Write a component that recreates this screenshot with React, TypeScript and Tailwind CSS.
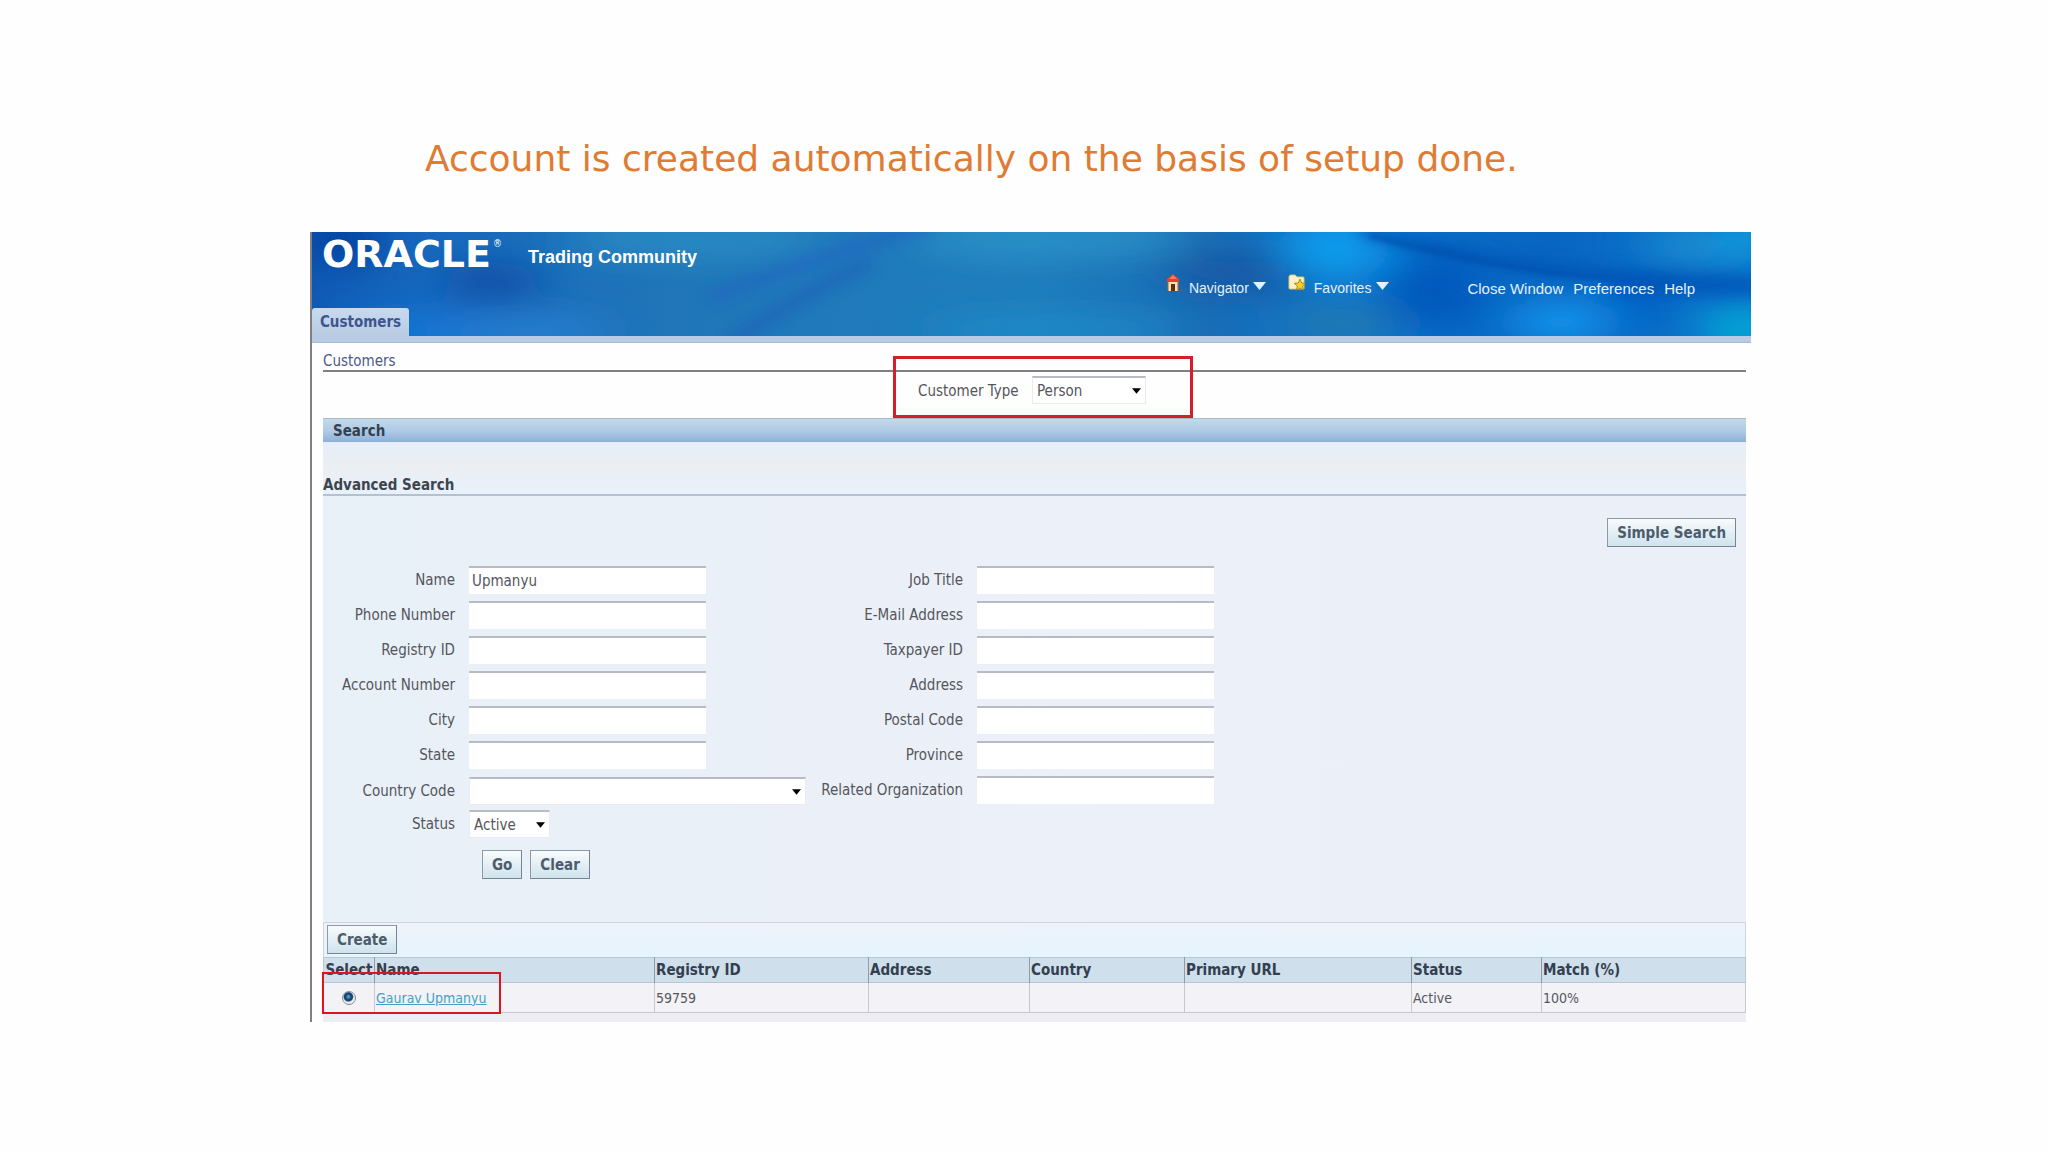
import type { ReactNode } from "react";

function Caret({ className }: { className: string }) {
  return (
    <svg viewBox="0 0 10 6" className={className} aria-hidden="true">
      <path d="M0 0h10L5 6z" fill="currentColor" />
    </svg>
  );
}

function HeaderArt() {
  return (
    <svg
      viewBox="0 0 1441 104"
      preserveAspectRatio="none"
      className="absolute inset-0 h-full w-full"
      aria-hidden="true"
    >
      <defs>
        <linearGradient id="sky" x1="0" x2="1" y1="0" y2="0">
          <stop offset="0" stopColor="#0f59b4" />
          <stop offset="0.08" stopColor="#1668bd" />
          <stop offset="0.25" stopColor="#2076b8" />
          <stop offset="0.5" stopColor="#1f7dbd" />
          <stop offset="0.62" stopColor="#1a6db5" />
          <stop offset="0.72" stopColor="#0a72cc" />
          <stop offset="0.86" stopColor="#0866c2" />
          <stop offset="1" stopColor="#0b74cc" />
        </linearGradient>
        <filter id="wide" x="-100%" y="-200%" width="300%" height="500%">
          <feGaussianBlur stdDeviation="24 16" />
        </filter>
        <filter id="streak" x="-50%" y="-100%" width="200%" height="300%">
          <feGaussianBlur stdDeviation="7" />
        </filter>
        <filter id="edge" x="-20%" y="-50%" width="140%" height="200%">
          <feGaussianBlur stdDeviation="2" />
        </filter>
      </defs>
      <rect width="1441" height="104" fill="url(#sky)" />
      <g filter="url(#wide)">
        <ellipse cx="30" cy="8" rx="36" ry="24" fill="#063f9c" />
        <ellipse cx="180" cy="50" rx="50" ry="20" fill="#0b4fa8" />
        <ellipse cx="110" cy="100" rx="100" ry="18" fill="#1877d8" />
        <ellipse cx="220" cy="100" rx="80" ry="14" fill="#2a82d6" />
        <ellipse cx="380" cy="6" rx="130" ry="18" fill="#2c8cc4" />
        <ellipse cx="740" cy="6" rx="140" ry="18" fill="#2a93c8" />
        <ellipse cx="740" cy="98" rx="130" ry="16" fill="#1c8ac8" />
        <ellipse cx="930" cy="40" rx="80" ry="22" fill="#1458a4" />
        <ellipse cx="1025" cy="16" rx="55" ry="30" fill="#0e9cec" />
        <ellipse cx="1030" cy="92" rx="60" ry="22" fill="#2379b2" />
        <ellipse cx="1125" cy="60" rx="50" ry="36" fill="#0558bc" />
        <ellipse cx="1250" cy="90" rx="50" ry="20" fill="#169af0" />
        <ellipse cx="1330" cy="70" rx="30" ry="22" fill="#0562c6" />
        <ellipse cx="1390" cy="12" rx="60" ry="18" fill="#1a8ed0" />
        <ellipse cx="1430" cy="98" rx="34" ry="22" fill="#02b4d8" />
        <ellipse cx="1437" cy="6" rx="20" ry="16" fill="#06b4ea" />
      </g>
      <g filter="url(#streak)" fill="none" opacity="0.75">
        <path d="M400 66C460 42 530 16 620 -6" stroke="#2262c4" strokeWidth="10" />
        <path d="M420 110C460 84 490 62 560 30" stroke="#1d64b8" strokeWidth="14" />
        <path d="M1050 -2C1150 26 1260 46 1460 50" stroke="#0450b0" strokeWidth="12" />
        <path d="M1300 54C1350 60 1390 58 1460 56" stroke="#0452b8" strokeWidth="14" />
      </g>
      <path
        d="M1060 4C1140 24 1210 40 1300 46"
        fill="none"
        stroke="#0648a8"
        strokeWidth="4"
        opacity="0.5"
        filter="url(#edge)"
      />
    </svg>
  );
}

function HouseIcon() {
  return (
    <svg viewBox="0 0 14 18" className="h-[18px] w-[14px]" aria-hidden="true">
      <path d="M2 8h10v9H2z" fill="#f3e3b4" />
      <path d="M7 0 1 5v3h12V5z" fill="#e2412e" />
      <path d="M7 1 3 5h8z" fill="#f47b5c" />
      <path d="M5 10h4v7H5z" fill="#5a2f1c" />
      <path d="M2 8v9M12 8v9" stroke="#b5651f" />
    </svg>
  );
}

function FolderStarIcon() {
  return (
    <svg viewBox="0 0 18 18" className="h-[18px] w-[18px]" aria-hidden="true">
      <path d="M1 3q0-2 2-2h4l2 2h6q1 0 1 1v11H2q-1 0-1-1z" fill="#fbf0c8" stroke="#e0c67e" />
      <path
        d="m12 5 1.7 4 4.1.3-3.2 2.8 1 4.2-3.6-2.3-3.6 2.3 1-4.2-3.2-2.8 4.1-.3z"
        fill="#f4d21f"
        stroke="#8d7a1c"
        strokeWidth="0.8"
      />
    </svg>
  );
}

function Button({ children }: { children: ReactNode }) {
  return (
    <button
      type="button"
      className="h-[29px] border border-[#8d9ba8] border-r-[#77838f] border-b-[#77838f] bg-linear-to-b from-[#f8fbfc] to-[#cfe3ee] px-[9px] leading-[18px] font-bold text-[#4d5c6c]"
    >
      {children}
    </button>
  );
}

function TextField({ id, label, value }: { id: string; label: string; value?: string }) {
  return (
    <div className="flex h-[28px] items-center justify-end gap-[14px]">
      <label htmlFor={id} className="whitespace-nowrap">{label}</label>
      <input
        id={id}
        defaultValue={value}
        className="h-full w-[237px] border-t-2 border-[#b9bbc3] bg-white px-[3px] outline-none"
      />
    </div>
  );
}

function Select({ id, value, className }: { id: string; value: string; className: string }) {
  return (
    <div className={className}>
      <select
        id={id}
        defaultValue={value}
        className="h-[28px] w-full appearance-none border border-t-2 border-[#eceaf0] border-t-[#b9bbc3] bg-white pl-[4px] outline-none"
      >
        <option>{value}</option>
      </select>
      <Caret className="pointer-events-none absolute top-[12px] right-[5px] h-[6px] w-[9px] text-black" />
    </div>
  );
}

const rightFields = [
  ["job", "Job Title"],
  ["email", "E-Mail Address"],
  ["tax", "Taxpayer ID"],
  ["address", "Address"],
  ["postal", "Postal Code"],
  ["province", "Province"],
  ["related", "Related Organization"],
];

const leftFields = [
  ["name", "Name", "Upmanyu"],
  ["phone", "Phone Number", ""],
  ["registry", "Registry ID", ""],
  ["account", "Account Number", ""],
  ["city", "City", ""],
  ["state", "State", ""],
];

const columns = ["Registry ID", "Address", "Country", "Primary URL", "Status", "Match (%)"];
const values = ["59759", "", "", "", "Active", "100%"];

export default function App() {
  return (
    <main className="min-h-screen bg-[#fefefe] font-['DejaVu_Sans_Condensed','DejaVu_Sans',sans-serif] text-[15px] leading-[18px] text-[#55565c]">
      <h1 className="pt-[136px] pl-[425px] font-['DejaVu_Sans',sans-serif] text-[36px] leading-[46px] text-[#e07b33]">
        Account is created automatically on the basis of setup done.
      </h1>

      <section className="mt-[50px] mr-[297px] ml-[310px] border-l-2 border-[#808080]">
        <header className="relative flex h-[104px] justify-between bg-[#1a6db5] text-white">
          <HeaderArt />
          <div className="relative flex flex-col justify-between">
            <div className="flex items-start">
              <span className="pl-[10px] font-['DejaVu_Sans',sans-serif] text-[38px] leading-[44px] font-bold">
                ORACLE
              </span>
              <span className="pt-[7px] pl-[2px] text-[10px] leading-[10px]">®</span>
              <span className="pt-[14px] pl-[26px] font-['Liberation_Sans',sans-serif] text-[18px] leading-[22px] font-bold">
                Trading Community
              </span>
            </div>
            <a
              href="#customers"
              className="flex h-[28px] w-[97px] items-center justify-center rounded-t-[3px] bg-linear-to-b from-[#c8daf0] to-[#b9cbe0] font-bold text-[#3d5590]"
            >
              Customers
            </a>
          </div>
          <nav className="relative flex items-start pt-[42px] pr-[56px] font-['Liberation_Sans',sans-serif] text-[15px] text-[#e4f1fb]">
            <a href="#navigator" className="flex items-start text-[14px]">
              <HouseIcon />
              <span className="pt-[5px] pl-[9px]">Navigator</span>
              <Caret className="mt-[8px] ml-[4px] h-[8px] w-[13px]" />
            </a>
            <a href="#favorites" className="ml-[22px] flex items-start text-[14px]">
              <FolderStarIcon />
              <span className="pt-[5px] pl-[8px]">Favorites</span>
              <Caret className="mt-[8px] ml-[5px] h-[8px] w-[13px]" />
            </a>
            <a href="#close" className="ml-[78px] pt-[6px]">Close Window</a>
            <a href="#preferences" className="ml-[10px] pt-[6px]">Preferences</a>
            <a href="#help" className="ml-[10px] pt-[6px]">Help</a>
          </nav>
        </header>
        <div className="h-[7px] border-b border-[#a9b9cc] bg-[#b8cce6]" />

        <div className="pr-[5px] pl-[11px]">
          <h2 id="customers" className="border-b-2 border-[#808084] pt-[9px] text-[#4b5a86]">
            Customers
          </h2>
          <div className="relative flex h-[46px] items-start pt-[4px] pl-[595px]">
            <div className="pointer-events-none absolute -top-[16px] left-[570px] h-[62px] w-[300px] border-[3px] border-[#d21f2c]" />
            <label htmlFor="type" className="w-[114px] pt-[6px]">Customer Type</label>
            <Select id="type" value="Person" className="relative w-[114px]" />
          </div>

          <div className="bg-[#ebeff8]">
            <h3 className="flex h-[24px] items-center border-t border-[#a9bac8] bg-linear-to-b from-[#c3d9e8] via-[#b0cbe8] to-[#8db1d4] pl-[10px] font-bold text-[#33424f]">
              Search
            </h3>
            <h4 className="border-b-2 border-[#b3c1d1] bg-linear-to-b from-[#e6eef9] via-[#eceff3] to-[#e8f1fa] pt-[34px] font-bold text-[#3d454f]">
              Advanced Search
            </h4>
            <form className="flex flex-col bg-linear-to-r from-[#e8f0f8] via-[#ecf0f8] to-[#ebeff8] pb-[43px]">
              <div className="flex justify-end pt-[22px] pr-[10px] pb-[19px]">
                <Button>Simple Search</Button>
              </div>
              <div className="flex items-start">
                <div className="flex w-[383px] flex-col gap-[7px]">
                  {leftFields.map(([id, label, value]) => (
                    <TextField key={id} id={id} label={label} value={value} />
                  ))}
                  <div className="mt-px flex items-start gap-[14px]">
                    <label htmlFor="country" className="w-[132px] shrink-0 pt-[5px] text-right">Country Code</label>
                    <Select id="country" value="" className="relative w-[337px] shrink-0" />
                  </div>
                  <div className="-mt-[2px] flex items-start gap-[14px]">
                    <label htmlFor="status" className="w-[132px] shrink-0 pt-[5px] text-right">Status</label>
                    <Select id="status" value="Active" className="relative w-[81px]" />
                  </div>
                  <div className="mt-[5px] flex gap-[8px] pl-[159px]">
                    <Button>Go</Button>
                    <Button>Clear</Button>
                  </div>
                </div>
                <div className="ml-[108px] flex w-[400px] flex-col gap-[7px]">
                  {rightFields.map(([id, label]) => (
                    <TextField key={id} id={id} label={label} />
                  ))}
                </div>
              </div>
            </form>

            <div className="flex h-[35px] items-start border border-b-0 border-[#cdd5df] bg-linear-to-b from-[#eef2fa] to-[#e5f4fe] pt-[2px] pl-[3px]">
              <Button>Create</Button>
            </div>
            <div className="relative bg-[#eeedf3] pb-[9px]">
              <table className="w-full table-fixed border-collapse text-left">
                <colgroup>
                  <col className="w-[51px]" />
                  <col className="w-[280px]" />
                  <col className="w-[214px]" />
                  <col className="w-[161px]" />
                  <col className="w-[155px]" />
                  <col className="w-[227px]" />
                  <col className="w-[130px]" />
                  <col />
                </colgroup>
                <thead>
                  <tr className="h-[25px] border border-[#b9c7d2] bg-[#cfdfec] text-[#33404f]">
                    <th className="p-0 text-center">Select</th>
                    {["Name", ...columns].map((c) => (
                      <th key={c} className="border-l border-[#8f9ba6] p-0 pl-px">{c}</th>
                    ))}
                  </tr>
                </thead>
                <tbody className="text-[14px]">
                  <tr className="h-[30px] border border-[#c6c8d0] bg-[#f2f2f7]">
                    <td className="p-0">
                      <input
                        type="radio"
                        defaultChecked
                        aria-label="Select Gaurav Upmanyu"
                        className="mx-auto block h-[14px] w-[14px] appearance-none rounded-full border border-[#8b8f96] bg-[radial-gradient(circle_at_45%_40%,#5fb4e0_0,#16436f_30%,#16436f_42%,#e8edf2_55%)]"
                      />
                    </td>
                    <td className="border-l border-[#c6c8d0] p-0 pl-px">
                      <a href="#gaurav" className="text-[#4a9fc0] underline">Gaurav Upmanyu</a>
                    </td>
                    {values.map((v, i) => (
                      <td key={columns[i]} className="border-l border-[#c6c8d0] p-0 pl-px">{v}</td>
                    ))}
                  </tr>
                </tbody>
              </table>
              <div className="pointer-events-none absolute top-[15px] -left-px h-[42px] w-[179px] border-2 border-[#dc1420]" />
            </div>
          </div>
        </div>
      </section>
    </main>
  );
}
